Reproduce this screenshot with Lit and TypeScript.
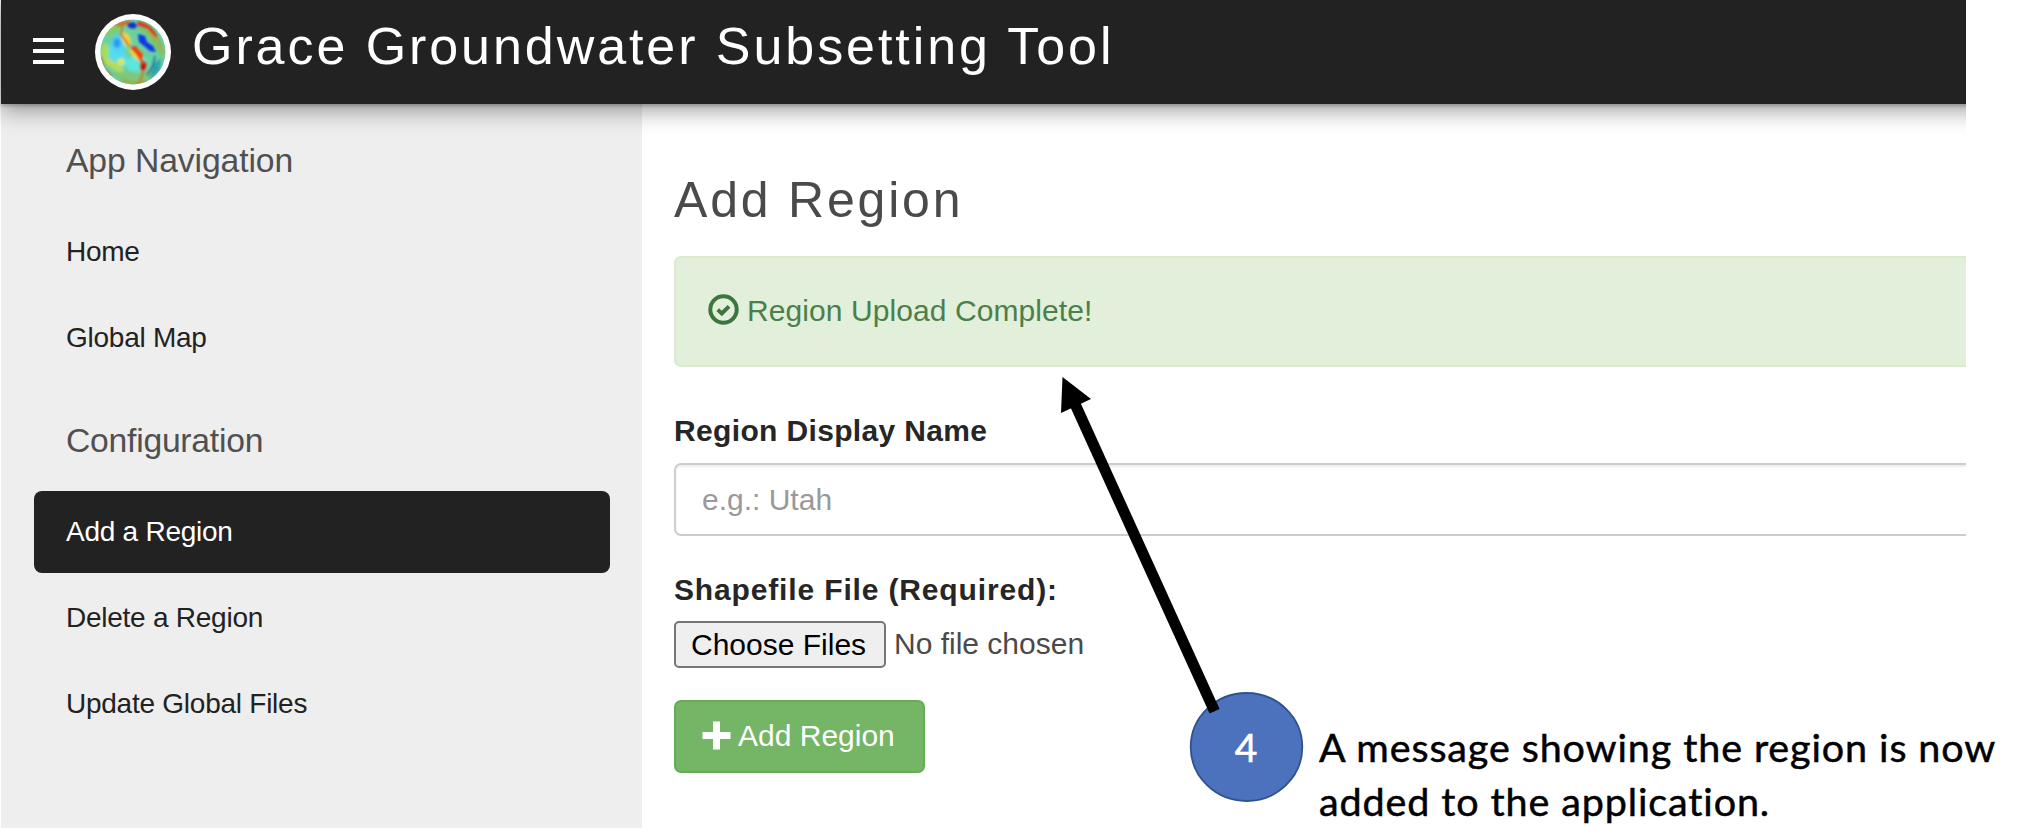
import { LitElement, html, css, svg } from "lit";
import { customElement } from "lit/decorators.js";

interface NavItem {
  label: string;
  active?: boolean;
}

const mainNav: NavItem[] = [{ label: "Home" }, { label: "Global Map" }];
const configNav: NavItem[] = [
  { label: "Add a Region", active: true },
  { label: "Delete a Region" },
  { label: "Update Global Files" },
];

const globe = svg`
  <defs>
    <clipPath id="disc"><circle cx="38" cy="38" r="32.5" /></clipPath>
    <filter id="soft" x="-20%" y="-20%" width="140%" height="140%"><feGaussianBlur stdDeviation="1.6" /></filter>
    <filter id="fine" x="-20%" y="-20%" width="140%" height="140%"><feGaussianBlur stdDeviation="0.9" /></filter>
  </defs>
  <circle cx="38" cy="38" r="38" fill="#fff" />
  <g clip-path="url(#disc)">
    <rect width="76" height="76" fill="#6ad0a4" />
    <g filter="url(#soft)">
      <ellipse cx="20" cy="42" rx="15" ry="9" fill="#55dcee" transform="rotate(35 20 42)" />
      <ellipse cx="42" cy="50" rx="11" ry="8" fill="#5ce6dc" />
      <ellipse cx="24" cy="30" rx="8" ry="9" fill="#4ed6f5" />
      <ellipse cx="22" cy="29" rx="3.5" ry="5" fill="#2f95ee" />
      <ellipse cx="10" cy="38" rx="4" ry="9" fill="#a6dd55" />
      <ellipse cx="18" cy="51" rx="13" ry="3.5" fill="#b9dc54" transform="rotate(35 18 51)" />
      <circle cx="26" cy="48" r="3.5" fill="#dfea32" />
      <path d="M6 24Q14 9 26 6L35 8L24 16L14 21Z" fill="#8bcc5c" />
      <path d="M36 14Q54 10 66 30L69 46L60 34L50 18Z" fill="#86c060" />
      <path d="M18 58L56 58L50 70L26 70Z" fill="#7dc67c" />
      <path d="M58 50L66 44L65 56L54 66Z" fill="#2f9fae" />
      <path d="M27 17L34 21L37 29L31 33L27 25Z" fill="#f4d33f" />
      <path d="M33 34L44 36L48 44L43 47L36 40Z" fill="#f0d33a" />
    </g>
    <g filter="url(#fine)">
      <path d="M43 7Q58 10 63 24L60 23L53 15L42 11Z" fill="#dd3b12" />
      <path d="M18 11L28 7L37 6L33 10L27 13Z" fill="#c9792c" />
      <path d="M32 9L39 8L43 12L38 15L33 13Z" fill="#0a34c8" />
      <path d="M43 20L50 22L52 28L58 32L61 38L55 37L49 32L44 28Z" fill="#0838e6" />
      <path d="M27 13L26 21L31 27L34 32" fill="none" stroke="#d9702c" stroke-width="1.7" />
      <path d="M35 33L41 32L44 36L48 40L47 46L52 49L51 55L47 58L45 53L46 48L42 41Z" fill="#e84416" />
      <path d="M47 49L51 51L49 56L46 55Z" fill="#b40d08" />
      <path d="M48 57L47 63L43 70" fill="none" stroke="#c9792b" stroke-width="2" />
      <path d="M60 42L58 52L52 61" fill="none" stroke="#1d6f8c" stroke-width="1.5" />
      <path d="M52 17L64 27L69 40" fill="none" stroke="#b4a23d" stroke-width="1.6" />
      <path d="M6 43L9 54L17 62" fill="none" stroke="#b0702d" stroke-width="1.6" />
      <path d="M27 66L38 69L52 67" fill="none" stroke="#b8952c" stroke-width="1.6" />
    </g>
  </g>`;

@customElement("app-root")
export class AppRoot extends LitElement {
  static styles = css`
    * { box-sizing: border-box; }
    :host {
      display: block;
      position: relative;
      width: 2034px;
      height: 840px;
      overflow: hidden;
      background: #fff;
      font-family: "Liberation Sans", Arial, sans-serif;
      font-size: 30px;
      line-height: 40px;
      color: #4a4a4a;
    }
    .window {
      display: flex;
      flex-direction: column;
      width: 1966px;
      height: 828px;
      padding-left: 1px;
      overflow: hidden;
    }
    .header {
      display: flex;
      align-items: center;
      flex: none;
      height: 104px;
      margin-right: -40px;
      padding: 0 0 1px 32px;
      background: #222;
      box-shadow: 0 2px 3px rgba(0, 0, 0, 0.2), 0 6px 22px rgba(0, 0, 0, 0.4);
      z-index: 1;
    }
    .menu { display: flex; flex-direction: column; gap: 6.5px; width: 31px; margin-bottom: 1px; }
    .bar { height: 4.3px; background: #fff; }
    .globe { width: 76px; height: 76px; margin-left: 31px; }
    .title {
      margin: 0 0 12px 21px;
      font-size: 52px;
      line-height: 60px;
      letter-spacing: 2.93px;
      color: #fff;
      white-space: nowrap;
    }
    .body { display: flex; flex: 1; min-height: 0; }
    .sidebar { flex: none; width: 641px; padding: 36px 32px 0 33px; background: #eee; }
    .group {
      padding-left: 32px;
      font-size: 33.7px;
      line-height: 40px;
      letter-spacing: -0.1px;
      color: #505050;
    }
    .group-config { margin-top: 41px; letter-spacing: -0.25px; }
    .links { display: flex; flex-direction: column; gap: 4.5px; margin-top: 31px; }
    .links-config { margin-top: 31.5px; }
    .link {
      height: 81.5px;
      padding-left: 32px;
      font-size: 28px;
      line-height: 82px;
      letter-spacing: -0.25px;
      color: #222;
      border-radius: 8px;
    }
    .active { background: #222; color: #fff; }
    .main { flex: 1; min-width: 0; padding: 67px 0 0 32px; }
    .heading {
      margin: 0;
      font-size: 50px;
      line-height: 58px;
      font-weight: 400;
      letter-spacing: 2.8px;
    }
    .alert {
      display: flex;
      align-items: center;
      height: 111.5px;
      margin-top: 26.5px;
      padding-left: 32px;
      border: 2px solid #dbe9cc;
      border-right: 0;
      border-radius: 7px 0 0 7px;
      background: #e2efda;
      color: #4b7f4b;
      letter-spacing: 0.08px;
    }
    .check { width: 31px; height: 31px; margin: 0 8px 3px 0; }
    .label { margin-top: 44px; font-weight: 700; letter-spacing: 0.35px; color: #262626; }
    .label-file { margin-top: 34px; letter-spacing: 0.85px; }
    .input {
      height: 72.5px;
      margin: 12px -10px 0 0;
      padding-left: 26px;
      border: 2px solid #ccc;
      border-radius: 7px;
      box-shadow: inset 0 2px 2px rgba(0, 0, 0, 0.075);
      line-height: 69px;
      color: #999;
    }
    .file { display: flex; align-items: center; gap: 8px; margin-top: 11px; line-height: 46px; }
    .choose {
      width: 212px;
      height: 47px;
      border: 2px solid #767676;
      border-radius: 5px;
      background: #efefef;
      color: #000;
      padding-left: 15px;
      line-height: 43px;
    }
    .submit {
      display: flex;
      align-items: center;
      width: 250.5px;
      height: 73px;
      margin-top: 32px;
      padding-left: 26px;
      border: 2px solid #64ad57;
      border-radius: 7px;
      background: #74b566;
      color: #fff;
    }
    .plus { width: 29px; height: 29px; margin: 0 7px 2px 0; }
    .overlay { position: absolute; left: 0; top: 0; width: 2034px; height: 840px; }
    .note {
      position: absolute;
      left: 1319px;
      top: 720px;
      font-family: Lato, sans-serif;
      font-size: 39.5px;
      line-height: 54px;
      letter-spacing: 0.88px;
      font-variant-ligatures: none;
      -webkit-text-stroke: 0.5px #000;
      color: #000;
      white-space: nowrap;
    }
    .num { font-family: Lato, sans-serif; font-size: 39px; stroke: #fff; stroke-width: 0.6px; }
  `;

  private renderLinks(items: NavItem[]) {
    return items.map(
      (item) => html`<div class="link ${item.active ? "active" : ""}">${item.label}</div>`,
    );
  }

  render() {
    return html`
      <div class="window">
        <div class="header">
          <div class="menu"><div class="bar"></div><div class="bar"></div><div class="bar"></div></div>
          <svg class="globe" viewBox="0 0 76 76">${globe}</svg>
          <div class="title">Grace Groundwater Subsetting Tool</div>
        </div>
        <div class="body">
          <nav class="sidebar">
            <div class="group">App Navigation</div>
            <div class="links">${this.renderLinks(mainNav)}</div>
            <div class="group group-config">Configuration</div>
            <div class="links links-config">${this.renderLinks(configNav)}</div>
          </nav>
          <main class="main">
            <h1 class="heading">Add Region</h1>
            <div class="alert">
              <svg class="check" viewBox="0 0 31 31">
                <circle cx="15.5" cy="15.5" r="13.2" fill="none" stroke="#3c763d" stroke-width="4" />
                <path d="M9.7 15.6L13.8 19.4L21 12.4" fill="none" stroke="#3c763d" stroke-width="4" />
              </svg>
              <span>Region Upload Complete!</span>
            </div>
            <div class="label">Region Display Name</div>
            <div class="input">e.g.: Utah</div>
            <div class="label label-file">Shapefile File (Required):</div>
            <div class="file"><div class="choose">Choose Files</div><span>No file chosen</span></div>
            <div class="submit">
              <svg class="plus" viewBox="0 0 29 29">
                <path d="M11 0.5H18V11H28.5V18H18V28.5H11V18H0.5V11H11Z" fill="#fff" />
              </svg>
              <span>Add Region</span>
            </div>
          </main>
        </div>
      </div>
      <svg class="overlay" viewBox="0 0 2034 840">
        <ellipse cx="1246.5" cy="747" rx="55.8" ry="54" fill="#4c72be" stroke="#2f528f" stroke-width="1.8" />
        <text class="num" x="1246" y="761.5" text-anchor="middle" fill="#fff">4</text>
        <path d="M1214.6 711.3L1075 404" fill="none" stroke="#000" stroke-width="11" />
        <path d="M1062.5 377L1091 399L1061 413Z" fill="#000" />
      </svg>
      <div class="note">A message showing the region is now<br />added to the application.</div>
    `;
  }
}
